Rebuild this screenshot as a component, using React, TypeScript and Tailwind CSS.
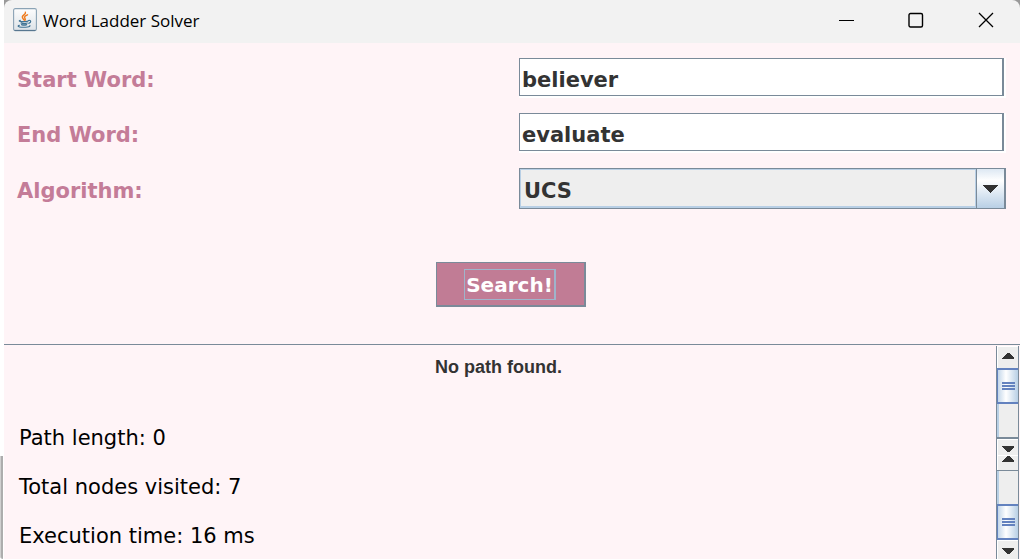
import { useState } from "react";

type ArrowProps = { direction: "up" | "down"; className?: string };

function Arrow({ direction, className }: ArrowProps) {
  return (
    <svg
      aria-hidden="true"
      viewBox="0 0 12 6"
      shapeRendering="crispEdges"
      className={`block h-[6px] w-[12px] shrink-0 ${className ?? ""}`}
    >
      <path d={direction === "up" ? "M0 6V5L5 0h2l5 5v1z" : "M0 0v1l5 5h2l5-5V0z"} fill="#333333" />
    </svg>
  );
}

function JavaIcon() {
  return (
    <svg aria-hidden="true" viewBox="0 0 24 24" className="size-6 shrink-0">
      <defs>
        <linearGradient id="tile" x1="0" y1="0" x2="0" y2="1">
          <stop offset="0" stopColor="#fdfdfd" />
          <stop offset="1" stopColor="#dde3e8" />
        </linearGradient>
      </defs>
      <rect x="0.6" y="0.6" width="22.8" height="22" rx="1.6" fill="url(#tile)" stroke="#8ba3b5" strokeWidth="1.1" />
      <path d="M1.5 22.4h21" stroke="#52738c" strokeWidth="1" />
      <path
        d="M12.4 4.2c.8 2-2.9 2.9-3.1 4.7-.1 1.400 1.300 2.300 2 3.200M14.500 6.800c-1.500.6-3.400 1.500-2.900 2.900.3.900 1.400 1.400.4 2.600"
        fill="none"
        stroke="#ee7a1c"
        strokeWidth="1.4"
        strokeLinecap="round"
      />
      <path
        d="M7.400 12.300c-1.600.4-1.700 1 .3 1.200 2.500.3 5.400.1 7.300-.4M8 14.900c1.900.8 4.600.7 6.300.1M8.500 16.600c1.500.6 3.700.6 5.200 0M15.500 12.500c2.600-.7 3.200 1.700.3 2.900M6.400 17.300c-2.400.6-1.200 1.700 2.200 1.900 3.900.3 9.100-.3 8.300-1.600"
        fill="none"
        stroke="#3f7394"
        strokeWidth="1.150"
        strokeLinecap="round"
      />
    </svg>
  );
}

function TitleBar() {
  return (
    <div className="bg-[#999999]">
      <header className="flex h-[43px] items-center rounded-t-lg bg-[#f2f2f2] pr-[18px] pb-[3px] pl-[9px]">
        <JavaIcon />
        <h1 className="ml-[6px] grow pt-px font-['Open_Sans',sans-serif] text-[17px] leading-6 text-black">
          Word Ladder Solver
        </h1>
        <div className="flex items-center gap-[38px] text-black">
          <button type="button" aria-label="Minimize" className="flex w-8 justify-center">
            <svg viewBox="0 0 16 16" className="size-4" stroke="currentColor">
              <path d="M1 8.500h15" />
            </svg>
          </button>
          <button type="button" aria-label="Maximize" className="flex w-8 justify-center">
            <svg viewBox="0 0 16 16" className="size-4" fill="none" stroke="currentColor" strokeWidth="1.400">
              <rect x="1" y="1.500" width="13.500" height="13.500" rx="1.500" />
            </svg>
          </button>
          <button type="button" aria-label="Close" className="flex w-8 justify-center">
            <svg viewBox="0 0 16 16" className="size-4" stroke="currentColor" strokeWidth="1.300">
              <path d="M1 1l14 14M15 1L1 15" />
            </svg>
          </button>
        </div>
      </header>
    </div>
  );
}

type TextRowProps = { id: string; label: string; value: string; onChange: (value: string) => void };

function TextRow({ id, label, value, onChange }: TextRowProps) {
  return (
    <>
      <label htmlFor={id} className="pt-1 text-[#c47c98]">
        {label}
      </label>
      <div className="h-10 bg-white pr-[2px] pb-[2px]">
        <input
          id={id}
          type="text"
          value={value}
          onChange={(event) => onChange(event.target.value)}
          className="block h-full w-full border border-r-2 border-[#7a8a99] bg-white px-[2px] pt-[5px] text-[#333333] outline-none"
        />
      </div>
    </>
  );
}

function Thumb() {
  return (
    <div className="flex h-9 shrink-0 flex-col items-center justify-center gap-px border-y-2 border-l border-[#6382bf] bg-linear-to-r from-[#c4d7ea] via-white via-40% to-[#b8cfe5]">
      <span className="h-[2px] w-[13px] bg-[#6382bf]" />
      <span className="h-[2px] w-[13px] bg-[#6382bf]" />
      <span className="h-[2px] w-[13px] bg-[#6382bf]" />
    </div>
  );
}

function Track() {
  return <div className="min-h-0 grow border-l-2 border-[#b8cfe5] bg-[#eeeeee]" />;
}

const STEP = "flex shrink-0 justify-center border-t border-l border-white bg-[#eeeeee] pr-px";

function ScrollBars() {
  return (
    <div className="flex w-[23px] shrink-0 flex-col pt-px">
      <div className="flex h-[110px] flex-col border-x border-[#7a8a99]">
        <button type="button" aria-label="Scroll up" className={`${STEP} h-[22px] items-start pt-[6px]`}>
          <Arrow direction="up" />
        </button>
        <Thumb />
        <Track />
        <div className="h-[2px] shrink-0 bg-[#7a8a99]" />
        <button type="button" aria-label="Scroll down" className={`${STEP} h-[17px] items-end pb-[4px]`}>
          <Arrow direction="down" />
        </button>
      </div>
      <div className="flex min-h-0 grow flex-col border-x border-[#7a8a99]">
        <button type="button" aria-label="Scroll statistics up" className={`${STEP} -mt-px h-[15px] items-start`}>
          <Arrow direction="up" />
        </button>
        <div className="h-px shrink-0 bg-[#7a8a99]" />
        <Track />
        <Thumb />
        <button type="button" aria-label="Scroll statistics down" className={`${STEP} h-[19px] items-start pt-[7px]`}>
          <Arrow direction="down" />
        </button>
      </div>
    </div>
  );
}

export default function App() {
  const [start, setStart] = useState("believer");
  const [end, setEnd] = useState("evaluate");

  return (
    <div className="flex min-h-screen bg-white font-['DejaVu_Sans',sans-serif]">
      <div className="flex w-1 shrink-0 flex-col items-start justify-end">
        <div className="h-[103px] w-[3px] rounded-bl-sm border-l border-[#d0d0d0] bg-[#adadad]" />
      </div>
      <div className="flex min-w-0 grow flex-col bg-[#fff4f7]">
        <TitleBar />
        <form
          onSubmit={(event) => event.preventDefault()}
          className="flex flex-col border-b border-[#7a8a99] pt-[15px] pr-[14px] pb-[37px] pl-[13px] text-[21px] leading-7 font-bold"
        >
          <div className="grid w-full grid-cols-2 items-center gap-[15px]">
            <TextRow id="start-word" label="Start Word:" value={start} onChange={setStart} />
            <TextRow id="end-word" label="End Word:" value={end} onChange={setEnd} />
            <label htmlFor="algorithm" className="pt-1 text-[#c47c98]">
              Algorithm:
            </label>
            <div className="relative flex h-[41px] border border-r-2 border-[#7a8a99]">
              <select
                id="algorithm"
                className="grow appearance-none border border-b-2 border-[#b8cfe5] bg-[#eeeeee] pt-[5px] pl-[3px] text-[#333333] outline-none"
              >
                <option>UCS</option>
              </select>
              <span className="pointer-events-none flex w-7 items-center justify-center border-l border-[#7a8a99] bg-linear-to-b from-[#dde8f3] via-white via-30% to-[#b8cfe5]">
                <svg aria-hidden="true" viewBox="0 0 15 8" shapeRendering="crispEdges" className="h-2 w-[15px]">
                  <path d="M0 0h15L8 8H7z" fill="#333333" />
                </svg>
              </span>
            </div>
          </div>
          <div className="flex justify-center pt-[53px] pr-[2px]">
            <button
              type="submit"
              className="flex h-[45px] w-[150px] items-center justify-center border border-r-2 border-b-2 border-[#7a8a99] bg-[#c17c95] text-[20px] text-white"
            >
              <span className="border border-r-2 border-[#9fb4cb] px-px pt-[2px] leading-[27px]">Search!</span>
            </button>
          </div>
        </form>
        <div className="flex min-h-0 grow">
          <section aria-live="polite" className="grow text-[21px] leading-7 text-black">
            <h2 className="pt-[8px] pr-[3px] text-center font-['Liberation_Sans',sans-serif] text-[18px] font-bold text-[#333333]">
              No path found.
            </h2>
            <div className="flex flex-col gap-[21px] pt-[43px] pl-[15px]">
              <p>Path length: 0</p>
              <p>Total nodes visited: 7</p>
              <p>Execution time: 16 ms</p>
            </div>
          </section>
          <ScrollBars />
          <div className="w-px shrink-0" />
        </div>
      </div>
    </div>
  );
}
